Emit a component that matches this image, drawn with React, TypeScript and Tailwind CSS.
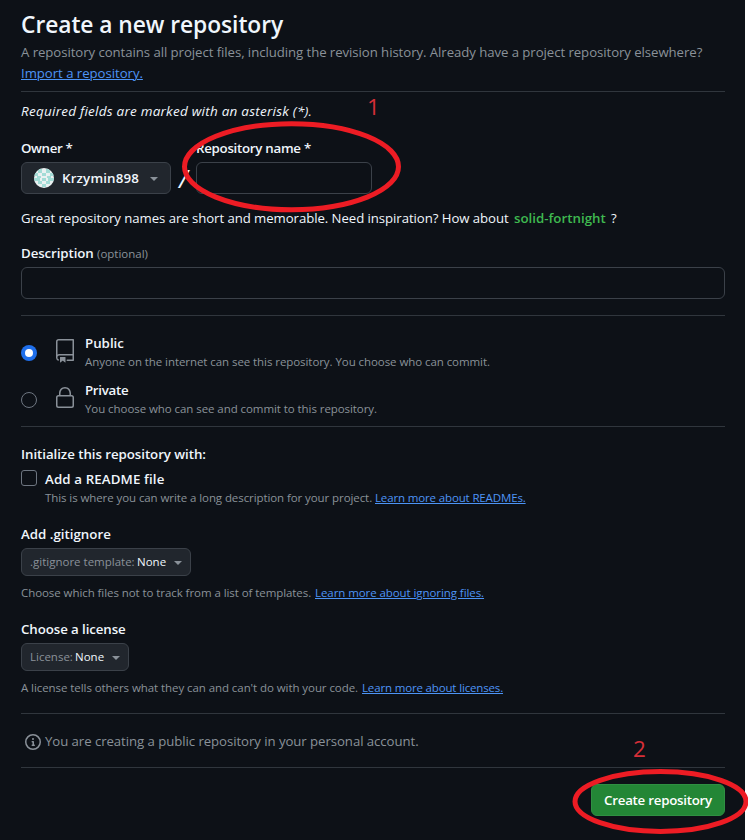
import type { ReactNode } from 'react';

const link = 'text-[#4d94f5] underline underline-offset-1 decoration-1';

function Divider({ className }: { className: string }) {
  return <div className={'h-px bg-[#30363d] ' + className} />;
}

function Label({ children, className }: { children: ReactNode; className: string }) {
  return <div className={'h-[21px] text-[13.3px] leading-[23px] font-semibold text-[#f0f6fc] ' + className}>{children}</div>;
}

function Hint({ children, className }: { children: ReactNode; className: string }) {
  return <div className={'h-[18px] text-[11.5px] leading-[18px] text-[#8a9199] ' + className}>{children}</div>;
}

function Caret({ className = '' }: { className?: string }) {
  return (
    <svg className={'h-[4px] w-[8px] ' + className} viewBox="0 0 8 4" fill="#8a9199">
      <path d="M0 0h8L4 4z" />
    </svg>
  );
}

function Avatar() {
  return (
    <svg className="h-5 w-5 rounded-full" viewBox="0 0 20 20">
      <rect width="20" height="20" fill="#eaf1f1" />
      <g fill="#a3dcd6">
        <path d="M4 1h4v4H4zM12 1h4v4h-4zM0 5h4v3H0zM8 5h4v3H8zM16 5h4v3h-4zM3 8h4v2H3zM13 8h4v2h-4zM0 10h6v3H0zM8 10h4v3H8zM14 10h6v3h-6zM4 13h4v3H4zM12 13h4v3h-4zM8 16h4v3H8z" />
      </g>
    </svg>
  );
}

function RepoIcon() {
  return (
    <svg className="h-6 w-6" viewBox="0 0 24 24" fill="#8a9199">
      <path d="M3 2.75A2.75 2.75 0 0 1 5.75 0h14.5a.75.75 0 0 1 .75.75v20.5a.75.75 0 0 1-.75.75h-6a.75.75 0 0 1 0-1.5h5.25v-4H6A1.5 1.5 0 0 0 4.5 18v.75c0 .716.43 1.334 1.05 1.605a.75.75 0 0 1-.6 1.374A3.251 3.251 0 0 1 3 18.75ZM19.5 1.5H5.75c-.69 0-1.25.56-1.25 1.25v12.651A2.989 2.989 0 0 1 6 15h13.5Z" />
      <path d="M7 18.25a.25.25 0 0 1 .25-.25h5a.25.25 0 0 1 .25.25v5.01a.25.25 0 0 1-.397.201l-2.206-1.604a.25.25 0 0 0-.294 0L7.397 23.46a.25.25 0 0 1-.397-.2v-5.01Z" />
    </svg>
  );
}

function LockIcon() {
  return (
    <svg className="h-6 w-6" viewBox="0 0 24 24" fill="#8a9199">
      <path d="M6 9V7.25C6 3.845 8.503 1 12 1s6 2.845 6 6.25V9h.5a2.5 2.5 0 0 1 2.5 2.5v8a2.5 2.5 0 0 1-2.5 2.5h-13A2.5 2.5 0 0 1 3 19.5v-8A2.5 2.5 0 0 1 5.5 9Zm-1.5 2.5v8a1 1 0 0 0 1 1h13a1 1 0 0 0 1-1v-8a1 1 0 0 0-1-1h-13a1 1 0 0 0-1 1Zm3-4.25V9h9V7.25c0-2.67-1.922-4.75-4.5-4.75-2.578 0-4.5 2.08-4.5 4.75Z" />
    </svg>
  );
}

function InfoIcon() {
  return (
    <svg className="h-4 w-4" viewBox="0 0 16 16" fill="#8a9199">
      <path d="M0 8a8 8 0 1 1 16 0A8 8 0 0 1 0 8Zm8-6.5a6.5 6.5 0 1 0 0 13 6.5 6.5 0 0 0 0-13ZM6.5 7.75A.75.75 0 0 1 7.25 7h1a.75.75 0 0 1 .75.75v2.75h.25a.75.75 0 0 1 0 1.5h-2a.75.75 0 0 1 0-1.5h.25v-2h-.25a.75.75 0 0 1-.75-.75ZM8 6a1 1 0 1 1 0-2 1 1 0 0 1 0 2Z" />
    </svg>
  );
}

export default function App() {
  return (
    <div className="relative h-[840px] w-[748px] overflow-hidden bg-white font-['Open_Sans','Noto_Sans',sans-serif] whitespace-nowrap">
      <main className="h-[840px] w-[745px] bg-[#0d1117] pt-[9px] pr-5 pl-[21px] text-[#f0f6fc]">
        <h1 className="h-[30px] text-[22.8px] leading-[32px] font-semibold tracking-[-0.06px]">Create a new repository</h1>
        <p className="mt-0.5 h-[21px] text-[13.2px] leading-[23px] tracking-[-0.06px] text-[#8a9199]">
          A repository contains all project files, including the revision history. Already have a project repository elsewhere?
        </p>
        <p className="h-[21px] text-[13.2px] leading-[23px] tracking-[-0.04px]">
          <a className={link}>Import a repository.</a>
        </p>
        <Divider className="mt-2" />
        <p className="mt-2 h-[21px] text-[13.5px] leading-[23px] tracking-[0.24px] italic">Required fields are marked with an asterisk (*).</p>

        <div className="mt-4 flex">
          <div className="w-[150px]">
            <Label className="tracking-[-0.35px]">Owner *</Label>
            <button className="mt-1 flex h-8 w-[150px] items-center rounded-md border border-[#3b4149] bg-[#21262d] pr-3 pl-3">
              <Avatar />
              <span className="ml-[8px] text-[13.3px] leading-5 font-semibold tracking-[0.17px]">Krzymin898</span>
              <Caret className="mt-px ml-auto" />
            </button>
          </div>
          <div className="w-[25px] pt-[25px] pl-[8px] text-[25px] leading-8 italic">/</div>
          <div className="w-[176px]">
            <Label className="tracking-[-0.28px]">Repository name *</Label>
            <div className="mt-1 h-8 rounded-md border border-[#3b4149]" />
          </div>
        </div>

        <p className="mt-[13px] flex h-[21px] text-[13.2px] leading-[23px]">
          <span className="w-[493px] tracking-[-0.06px]">Great repository names are short and memorable. Need inspiration? How about</span>
          <span className="w-[97px] text-[13.3px] font-semibold text-[#3fb950]">solid-fortnight</span>
          <span>?</span>
        </p>

        <div className="mt-[14px] flex">
          <Label className="w-[76px] tracking-[-0.1px]">Description</Label>
          <Hint className="pt-[3px]">(optional)</Hint>
        </div>
        <div className="mt-1 h-8 rounded-md border border-[#3b4149]" />
        <Divider className="mt-4" />

        <div className="mt-4 flex h-[38px]">
          <div className="mt-[13px] flex h-4 w-4 items-center justify-center rounded-full bg-[#1f6feb]">
            <div className="h-2 w-2 rounded-full bg-white" />
          </div>
          <div className="mt-[7px] ml-4"><RepoIcon /></div>
          <div className="ml-2">
            <Label className="">Public</Label>
            <Hint className="tracking-[-0.068px]">Anyone on the internet can see this repository. You choose who can commit.</Hint>
          </div>
        </div>
        <div className="mt-[9px] flex h-[38px]">
          <div className="mt-[13px] h-4 w-4 rounded-full border border-[#6e7681]" />
          <div className="mt-[7px] ml-4"><LockIcon /></div>
          <div className="ml-2">
            <Label className="tracking-[-0.3px]">Private</Label>
            <Hint className="tracking-[-0.068px]">You choose who can see and commit to this repository.</Hint>
          </div>
        </div>
        <Divider className="mt-[9px]" />

        <Label className="mt-4 tracking-[-0.055px]">Initialize this repository with:</Label>
        <div className="mt-1 flex h-[39px]">
          <div className="mt-[2px] h-4 w-4 rounded-[3px] border border-[#6e7681]" />
          <div className="ml-2">
            <Label className="tracking-[0.12px]">Add a README file</Label>
            <Hint className="flex">
              <span className="w-[330px] tracking-[-0.085px]">This is where you can write a long description for your project.</span>
              <a className={link + ' tracking-[-0.14px]'}>Learn more about READMEs.</a>
            </Hint>
          </div>
        </div>

        <Label className="mt-4">Add .gitignore</Label>
        <button className="mt-[4px] flex h-7 w-[170px] items-center rounded-md border border-[#3b4149] bg-[#21262d] px-2 text-[11.5px]">
          <span className="w-[107px] text-left text-[#8a9199]">.gitignore template:</span>
          <span className="font-medium">None</span>
          <Caret className="mt-px ml-auto" />
        </button>
        <Hint className="mt-2 flex">
          <span className="w-[294px] tracking-[-0.07px]">Choose which files not to track from a list of templates.</span>
          <a className={link + ' tracking-[-0.075px]'}>Learn more about ignoring files.</a>
        </Hint>

        <Label className="mt-4 tracking-[-0.09px]">Choose a license</Label>
        <button className="mt-1 flex h-7 w-[108px] items-center rounded-md border border-[#3b4149] bg-[#21262d] px-2 text-[11.5px]">
          <span className="w-[45px] text-left text-[#8a9199]">License:</span>
          <span className="font-medium">None</span>
          <Caret className="mt-px ml-auto" />
        </button>
        <Hint className="mt-2 flex">
          <span className="w-[341px] tracking-[-0.07px]">A license tells others what they can and can't do with your code.</span>
          <a className={link + ' tracking-[-0.155px]'}>Learn more about licenses.</a>
        </Hint>
        <Divider className="mt-4" />

        <div className="mt-4 flex h-[21px] pl-1">
          <div className="mt-1"><InfoIcon /></div>
          <p className="ml-1 text-[13.2px] leading-[23px] tracking-[-0.057px] text-[#8a9199]">
            You are creating a public repository in your personal account.
          </p>
        </div>
        <Divider className="mt-4" />
        <div className="mt-4 flex justify-end">
          <button className="h-8 w-[134px] rounded-md border border-[#2f8f42] bg-[#238636] pt-0.5 text-[13.3px] font-semibold tracking-[-0.25px] text-white">
            Create repository
          </button>
        </div>
      </main>

      <svg className="pointer-events-none absolute inset-0" width="748" height="840" fill="none" stroke="#ed1c24" strokeWidth="5">
        <ellipse cx="291.5" cy="166.7" rx="107" ry="43" />
        <ellipse cx="660.5" cy="801.5" rx="85.5" ry="30" />
      </svg>
      <span className="absolute top-[92px] left-[367px] text-[22.5px] leading-[30px] text-[#d62f38]">1</span>
      <span className="absolute top-[734px] left-[633px] text-[22.5px] leading-[30px] text-[#d62f38]">2</span>
    </div>
  );
}
